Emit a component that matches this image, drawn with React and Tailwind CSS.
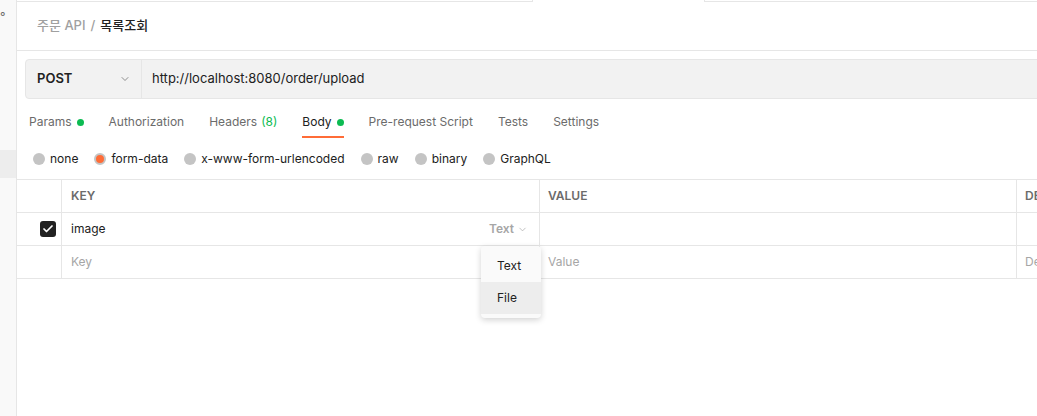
import { ChevronDown, Check } from "lucide-react";

const tabs = [
  { label: "Params", dot: true },
  { label: "Authorization" },
  { label: "Headers", count: "(8)" },
  { label: "Body", dot: true, active: true },
  { label: "Pre-request Script" },
  { label: "Tests" },
  { label: "Settings" },
];

const bodyTypes = ["none", "form-data", "x-www-form-urlencoded", "raw", "binary", "GraphQL"];

function Dot() {
  return <span className="ml-[5px] inline-block h-[7px] w-[7px] rounded-full bg-[#0cbb52]" />;
}

export default function App() {
  return (
    <div className="flex h-[416px] w-[1037px] overflow-hidden bg-white font-['Inter','Noto_Sans_CJK_KR',sans-serif] text-[12px] text-[#212121]">
      {/* collapsed sidebar */}
      <aside className="flex w-[17px] shrink-0 flex-col border-r border-[#e6e6e6] bg-[#f9f9f9]">
        <div className="h-[150px] pt-[9px] text-[12px] leading-[16px] text-[#6b6b6b]">°</div>
        <div className="h-[28px] bg-[#ededed]" />
      </aside>

      <main className="flex min-w-0 flex-1 flex-col">
        {/* edge of the tab strip */}
        <div className="flex h-[2px] shrink-0">
          <div className="w-[515px] border-b border-[#e6e6e6]" />
          <div className="w-[173px] border-x border-[#e6e6e6]" />
          <div className="flex-1 border-b border-[#e6e6e6]" />
        </div>

        {/* breadcrumb */}
        <div className="flex h-[49px] shrink-0 items-center border-b border-[#e6e6e6] pl-[20px] text-[13px]">
          <span className="font-medium text-[#a0a0a0]">주문 API</span>
          <span className="mx-[5px] font-medium text-[#a0a0a0]">/</span>
          <span className="font-medium text-[#212121]">목록조회</span>
        </div>

        {/* request bar */}
        <div className="-mr-4 ml-[8px] mt-[8px] flex h-[40px] shrink-0 rounded-[4px] border border-[#e6e6e6] bg-[#f2f2f2]">
          <div className="flex w-[116px] items-center justify-between border-r border-[#e6e6e6] pl-[11px] pr-[10px]">
            <span className="text-[13px] font-semibold text-[#212121]">POST</span>
            <ChevronDown className="h-[12px] w-[12px] text-[#6b6b6b]" strokeWidth={1.5} />
          </div>
          <div className="flex items-center pl-[10px] text-[13px] text-[#212121]">
            http://localhost:8080/order/upload
          </div>
        </div>

        {/* request tabs */}
        <div className="mt-[6px] flex h-[33px] shrink-0 gap-[25px] pl-[12px] text-[12px]">
          {tabs.map((t) => (
            <div
              key={t.label}
              className={
                "flex items-center border-b-2 pt-[3px] " +
                (t.active ? "border-[#ff6c37] text-[#212121]" : "border-transparent text-[#6b6b6b]")
              }
            >
              <span>{t.label}</span>
              {t.count && <span className="ml-[4px] text-[#0cbb52]">{t.count}</span>}
              {t.dot && <Dot />}
            </div>
          ))}
        </div>

        {/* body type radios */}
        <div className="flex h-[41px] shrink-0 items-center gap-[16px] pl-[16px] text-[12px]">
          {bodyTypes.map((b) => (
            <label key={b} className="flex items-center gap-[5px]">
              {b === "form-data" ? (
                <span className="h-[12px] w-[12px] rounded-full border-[2px] border-[#c4c4c4] bg-[#ff6c37]" />
              ) : (
                <span className="h-[12px] w-[12px] rounded-full bg-[#c4c4c4]" />
              )}
              <span>{b}</span>
            </label>
          ))}
        </div>

        {/* form-data table */}
        <div className="border-t border-[#e6e6e6]">
          <div className="grid h-[33px] grid-cols-[45px_478px_477px_1fr] border-b border-[#e6e6e6] text-[12px] font-semibold text-[#6b6b6b]">
            <div className="border-r border-[#e6e6e6]" />
            <div className="flex items-center border-r border-[#e6e6e6] pl-[9px]">KEY</div>
            <div className="flex items-center border-r border-[#e6e6e6] pl-[8px]">VALUE</div>
            <div className="flex items-center whitespace-nowrap pl-[8px]">DESCRIPTION</div>
          </div>

          <div className="grid h-[33px] grid-cols-[45px_478px_477px_1fr] border-b border-[#e6e6e6]">
            <div className="flex items-center justify-end border-r border-[#e6e6e6] pr-[5px]">
              <span className="flex h-[16px] w-[16px] items-center justify-center rounded-[3px] bg-[#212121]">
                <Check className="h-[12px] w-[12px] text-white" strokeWidth={3.5} />
              </span>
            </div>
            <div className="relative flex items-center justify-between border-r border-[#e6e6e6] pl-[9px] pr-[11px]">
              <span>image</span>
              <span className="flex items-center gap-[3px] font-semibold text-[#a6a6a6]">
                Text
                <ChevronDown className="h-[11px] w-[11px]" strokeWidth={1.5} />
              </span>

              <div className="absolute right-[-2px] top-[calc(100%+1px)] z-10 w-[60px] rounded-[4px] bg-[#fafafa] py-[4px] shadow-[0_2px_6px_rgba(0,0,0,0.18)]">
                <div className="flex h-[32px] items-center pl-[16px] text-[#212121]">Text</div>
                <div className="flex h-[32px] items-center bg-[#ededed] pl-[16px] text-[#212121]">File</div>
              </div>
            </div>
            <div className="border-r border-[#e6e6e6]" />
            <div />
          </div>

          <div className="grid h-[33px] grid-cols-[45px_478px_477px_1fr] border-b border-[#e6e6e6] text-[#a6a6a6]">
            <div className="border-r border-[#e6e6e6]" />
            <div className="flex items-center border-r border-[#e6e6e6] pl-[9px]">Key</div>
            <div className="flex items-center border-r border-[#e6e6e6] pl-[8px]">Value</div>
            <div className="flex items-center whitespace-nowrap pl-[8px]">Description</div>
          </div>
        </div>
      </main>
    </div>
  );
}
